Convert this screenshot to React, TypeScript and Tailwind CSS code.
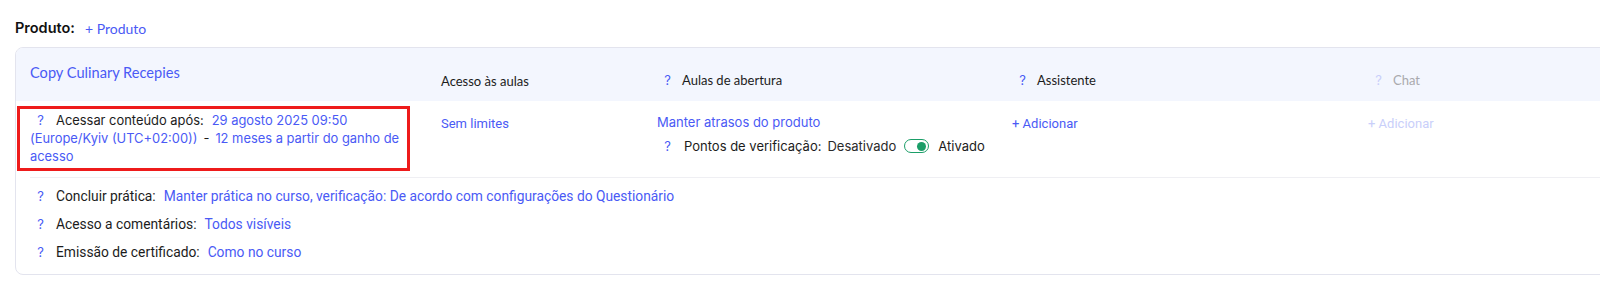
import React from 'react';

const blue = 'text-[#4a5af5]';

function QMark({ faded = false, className = '' }: { faded?: boolean; className?: string }) {
  return (
    <span
      className={`inline-block w-[7px] text-center font-['Inter',sans-serif] text-[13px] ${
        faded ? 'text-[#c9cffa]' : 'text-[#4a5af5]'
      } ${className}`}
    >
      ?
    </span>
  );
}

function HeaderCell({ label, faded = false }: { label: string; faded?: boolean }) {
  return (
    <div className="pt-[23px] pl-[7px] leading-[18px]">
      <div className="flex items-center">
        <QMark faded={faded} className="mr-[11px]" />
        <span className={`font-['Lato',sans-serif] text-[13px] ${faded ? 'text-[#a9a9ad]' : 'text-[#1c1c1c]'}`}>
          {label}
        </span>
      </div>
    </div>
  );
}

function InfoRow({ label, value }: { label: string; value: string }) {
  return (
    <div className="flex items-center leading-[18px] font-['Roboto',sans-serif] text-[13.8px]">
      <QMark className="ml-[7px] mr-[12px]" />
      <span className="text-[#1c1c1c]">{label}</span>
      <span className={`ml-[8px] ${blue}`}>{value}</span>
    </div>
  );
}

export default function App() {
  return (
    <div className="w-[1600px] h-[288px] overflow-hidden bg-white pl-[15px] pt-[18px]">
      <div className="flex items-center h-[20px] gap-[10px]">
        <span className="font-['Inter',sans-serif] font-semibold text-[14.5px] text-[#111]">Produto:</span>
        <span className={`font-['Lato',sans-serif] text-[14px] ${blue}`}>+ Produto</span>
      </div>

      <div className="mt-[9px] w-[1620px] border border-[#e3e4ee] rounded-lg overflow-hidden">
        {/* header */}
        <div className="h-[53px] bg-[#f3f6fe] grid grid-cols-[425px_216px_355px_356px_1fr]">
          <div className="pl-[14px] pt-[12px]">
            <span className={`font-['Lato',sans-serif] text-[14.6px] leading-[20px] ${blue}`}>Copy Culinary Recepies</span>
          </div>
          <div className="pt-[23px] leading-[18px]">
            <span className="font-['Lato',sans-serif] text-[13px] text-[#1c1c1c]">Acesso às aulas</span>
          </div>
          <HeaderCell label="Aulas de abertura" />
          <HeaderCell label="Assistente" />
          <HeaderCell label="Chat" faded />
        </div>

        {/* main row */}
        <div className="h-[76px] grid grid-cols-[425px_216px_355px_356px_1fr]">
          <div className="pt-[5px] pl-[1px]">
            <div className="w-[393px] border-[3px] border-[#ee1b1b] pl-[10px] pr-0 py-[2px] font-['Inter',sans-serif] text-[12.9px] leading-[18px] text-[#1c1c1c]">
              <QMark className="ml-[7px] mr-[12px]" />
              <span>Acessar conteúdo após:</span>
              <span className={`ml-[8px] ${blue}`}>29 agosto 2025 09:50 (Europe/Kyiv (UTC+02:00))</span>
              <span className="mx-[6px]">-</span>
              <span className={blue}>12 meses a partir do ganho de acesso</span>
            </div>
          </div>
          <div className="pt-[12px] leading-[18px]">
            <span className={`font-['Roboto',sans-serif] text-[13px] ${blue}`}>Sem limites</span>
          </div>
          <div className="pt-[12px] font-['Inter',sans-serif] text-[13px] leading-[18px]">
            <div className={blue}>Manter atrasos do produto</div>
            <div className="mt-[6px] flex items-center text-[#1c1c1c]">
              <QMark className="ml-[7px] mr-[13px]" />
              <span>Pontos de verificação:</span>
              <span className="ml-[6px] text-[#2a2a2a]">Desativado</span>
              <span className="ml-[8px] w-[25px] h-[14px] rounded-full border-[1.5px] border-[#1b9e68] flex items-center justify-end pr-[2px]">
                <span className="w-[9px] h-[9px] rounded-full bg-[#1b9e68]" />
              </span>
              <span className="ml-[9px]">Ativado</span>
            </div>
          </div>
          <div className="pt-[12px] leading-[18px]">
            <span className={`font-['Roboto',sans-serif] text-[13px] ${blue}`}>+ Adicionar</span>
          </div>
          <div className="pt-[12px] leading-[18px]">
            <span className="font-['Roboto',sans-serif] text-[13px] text-[#c9cffa]">+ Adicionar</span>
          </div>
        </div>

        <div className="ml-[14px] border-t border-[#efeff3]" />

        {/* settings */}
        <div className="pl-[14px] pt-[9px] pb-[13px] flex flex-col gap-[10px]">
          <InfoRow
            label="Concluir prática:"
            value="Manter prática no curso, verificação: De acordo com configurações do Questionário"
          />
          <InfoRow label="Acesso a comentários:" value="Todos visíveis" />
          <InfoRow label="Emissão de certificado:" value="Como no curso" />
        </div>
      </div>
    </div>
  );
}
